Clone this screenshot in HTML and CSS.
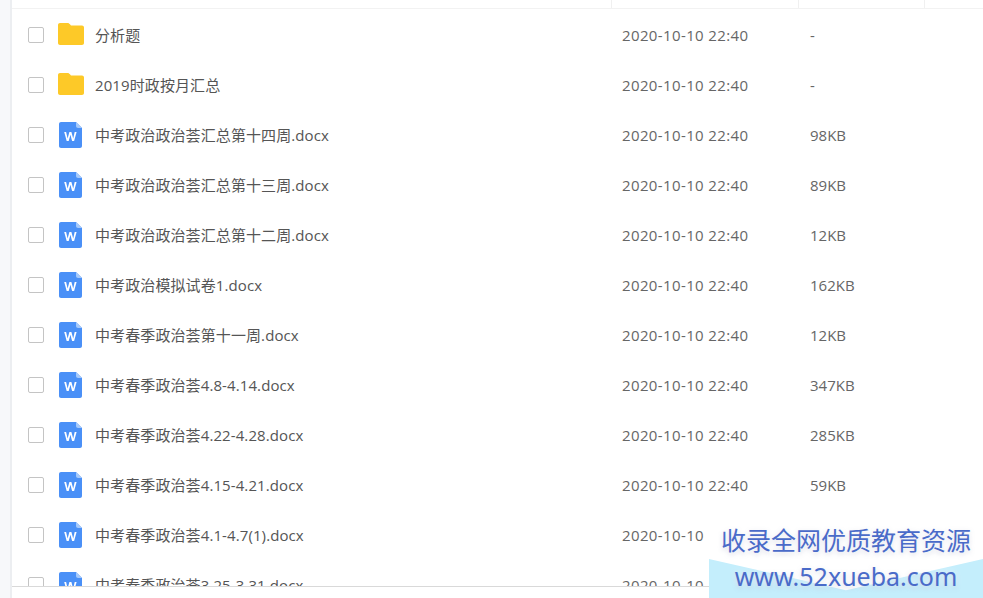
FILE: index.html
```html
<!DOCTYPE html>
<html lang="zh-CN">
  <head>
    <meta charset="UTF-8" />
    <title>文件列表</title>
    <link rel="stylesheet" href="styles.css">
  </head>
  <body>
    <svg class="defs" width="0" height="0">
      <symbol id="folder" viewBox="0 0 26 22">
        <path d="M2 0h7.5c1 0 1.6.4 2.2 1.1L13 2.6h11c1.1 0 2 .9 2 2V20c0 1.1-.9 2-2 2H2c-1.100 0-2-.9-2-2V2C0 .9.9 0 2 0z" fill="#fdc928"/>
      </symbol>
      <symbol id="word" viewBox="0 0 23 26">
        <path d="M2 0h15l6 6v18c0 1.100-.9 2-2 2H2c-1.100 0-2-.9-2-2V2C0 .9.900 0 2 0z" fill="#4a90f7"/>
        <path d="M17 0l6 6h-4c-1.100 0-2-.9-2-2z" fill="#a5c9fb"/>
        <path d="M5.200 10h1.900l1.500 6.600L10.400 10h2l1.800 6.600L15.700 10h1.900l-2.500 9h-2l-1.700-6.300L9.700 19h-2z" fill="#fff"/>
      </symbol>
    </svg>

    <div class="page">
      <div class="gutter"></div>
      <div class="main">
        <div class="table-head">
          <div class="head-cell head-name"></div>
          <div class="head-cell head-time"></div>
          <div class="head-cell head-size"></div>
          <div class="head-cell head-rest"></div>
        </div>

        <div class="file-list">
          <div class="row">
            <span class="check"></span>
            <svg class="icon-folder"><use href="#folder"/></svg>
            <span class="name">分析题</span>
            <span class="time">2020-10-10 22:40</span>
            <span class="size">-</span>
          </div>
          <div class="row">
            <span class="check"></span>
            <svg class="icon-folder"><use href="#folder"/></svg>
            <span class="name">2019时政按月汇总</span>
            <span class="time">2020-10-10 22:40</span>
            <span class="size">-</span>
          </div>
          <div class="row">
            <span class="check"></span>
            <svg class="icon-word"><use href="#word"/></svg>
            <span class="name">中考政治政治荟汇总第十四周.docx</span>
            <span class="time">2020-10-10 22:40</span>
            <span class="size">98KB</span>
          </div>
          <div class="row">
            <span class="check"></span>
            <svg class="icon-word"><use href="#word"/></svg>
            <span class="name">中考政治政治荟汇总第十三周.docx</span>
            <span class="time">2020-10-10 22:40</span>
            <span class="size">89KB</span>
          </div>
          <div class="row">
            <span class="check"></span>
            <svg class="icon-word"><use href="#word"/></svg>
            <span class="name">中考政治政治荟汇总第十二周.docx</span>
            <span class="time">2020-10-10 22:40</span>
            <span class="size">12KB</span>
          </div>
          <div class="row">
            <span class="check"></span>
            <svg class="icon-word"><use href="#word"/></svg>
            <span class="name">中考政治模拟试卷1.docx</span>
            <span class="time">2020-10-10 22:40</span>
            <span class="size">162KB</span>
          </div>
          <div class="row">
            <span class="check"></span>
            <svg class="icon-word"><use href="#word"/></svg>
            <span class="name">中考春季政治荟第十一周.docx</span>
            <span class="time">2020-10-10 22:40</span>
            <span class="size">12KB</span>
          </div>
          <div class="row">
            <span class="check"></span>
            <svg class="icon-word"><use href="#word"/></svg>
            <span class="name">中考春季政治荟4.8-4.14.docx</span>
            <span class="time">2020-10-10 22:40</span>
            <span class="size">347KB</span>
          </div>
          <div class="row">
            <span class="check"></span>
            <svg class="icon-word"><use href="#word"/></svg>
            <span class="name">中考春季政治荟4.22-4.28.docx</span>
            <span class="time">2020-10-10 22:40</span>
            <span class="size">285KB</span>
          </div>
          <div class="row">
            <span class="check"></span>
            <svg class="icon-word"><use href="#word"/></svg>
            <span class="name">中考春季政治荟4.15-4.21.docx</span>
            <span class="time">2020-10-10 22:40</span>
            <span class="size">59KB</span>
          </div>
          <div class="row">
            <span class="check"></span>
            <svg class="icon-word"><use href="#word"/></svg>
            <span class="name">中考春季政治荟4.1-4.7(1).docx</span>
            <span class="time">2020-10-10</span>
          </div>
          <div class="row">
            <span class="check"></span>
            <svg class="icon-word"><use href="#word"/></svg>
            <span class="name">中考春季政治荟3.25-3.31.docx</span>
            <span class="time">2020-10-10</span>
          </div>
        </div>
      </div>
    </div>

    <div class="watermark">
      <svg class="wm-bg" viewBox="0 0 274 40" preserveAspectRatio="none"><path d="M0 0L137 32 274 0V40H0z" fill="#c4eefc"/></svg>
      <div class="wm-title">收录全网优质教育资源</div>
      <div class="wm-url">www.52xueba.com</div>
    </div>
  </body>
</html>
```

FILE: styles.css
```css
html,
body {
  margin: 0;
  height: 100%;
  overflow: hidden;
  background: #fff;
}

body {
  font-family: "Open Sans", "Noto Sans CJK SC", sans-serif;
  font-size: 15px;
  color: #666;
}

.defs {
  display: block;
  height: 0;
}

.page {
  display: flex;
  height: 598px;
}

.gutter {
  width: 10px;
  background: #f7f8fa;
  border-right: 2px solid #eceef1;
}

.main {
  flex: 1;
  min-width: 0;
}

.table-head {
  display: flex;
  height: 8px;
  border-bottom: 1px solid #f2f2f2;
}

.head-cell {
  border-right: 1px solid #f0f0f0;
}

.head-name {
  width: 599px;
}

.head-time {
  width: 186px;
}

.head-size {
  width: 125px;
}

.head-rest {
  flex: 1;
  border-right: 0;
}

.file-list {
  height: 576px;
  padding-top: 1px;
  overflow: hidden;
  border-bottom: 1px solid #d9d9d9;
}

.row {
  display: flex;
  align-items: center;
  height: 50px;
}

.check {
  box-sizing: border-box;
  flex: none;
  width: 16px;
  height: 16px;
  margin-left: 16px;
  border: 1px solid #c4c4c4;
  border-radius: 2px;
}

.icon-folder {
  flex: none;
  width: 26px;
  height: 22px;
  margin: -2px 11px 0 14px;
}

.icon-word {
  flex: none;
  width: 23px;
  height: 26px;
  margin: 0 13px 0 15px;
}

.name {
  flex: none;
  width: 527px;
  padding-bottom: 2px;
  color: #555;
  letter-spacing: 0.1px;
}

.time {
  flex: none;
  width: 188px;
  padding-bottom: 1px;
  letter-spacing: 0.38px;
}

.size {
  padding-bottom: 1px;
}

.watermark {
  position: absolute;
  right: 0;
  bottom: 0;
  width: 274px;
  height: 76px;
  background: linear-gradient(to right, rgba(255, 255, 255, 0), #fff 3px);
  text-align: center;
}

.wm-bg {
  position: absolute;
  left: 0;
  bottom: 0;
  width: 100%;
  height: 39px;
}

.wm-title,
.wm-url {
  position: relative;
  color: #4a6bc9;
  text-shadow: 0 0 6px #fff, 0 2px 5px rgba(120, 130, 170, 0.35);
}

.wm-title {
  font-size: 25px;
  line-height: 36px;
}

.wm-url {
  font-family: "Noto Sans", sans-serif;
  font-size: 25px;
  line-height: 36px;
}
```
